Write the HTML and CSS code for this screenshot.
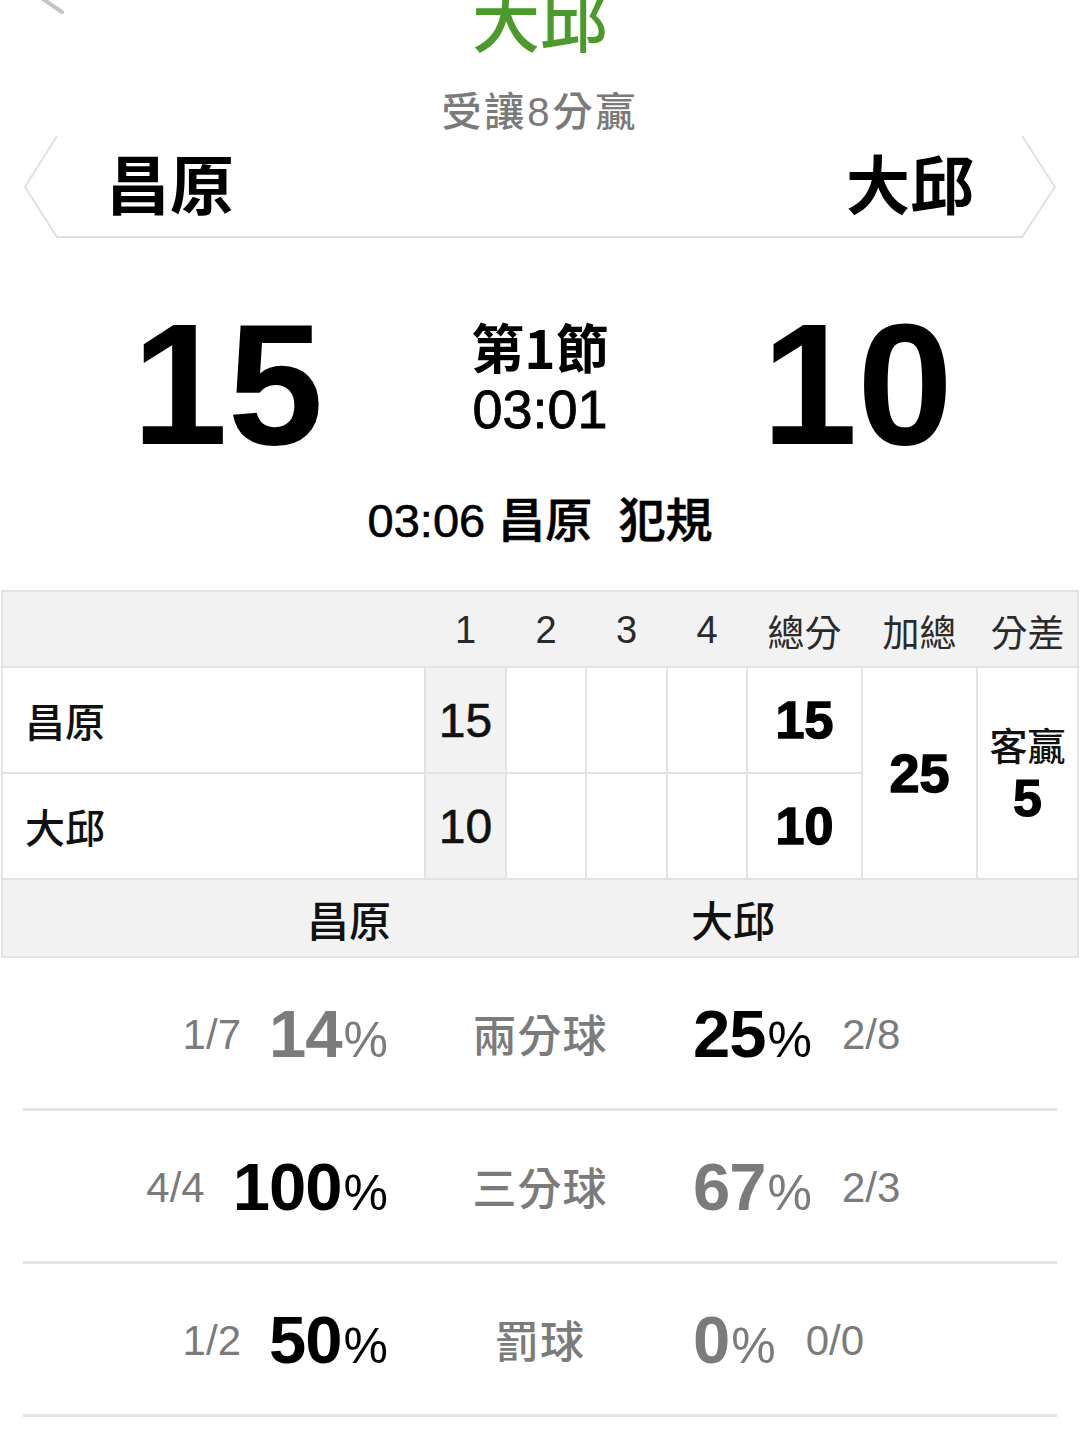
FILE: index.html
```html
<!DOCTYPE html>
<html lang="zh-Hant">
<head>
<meta charset="utf-8">
<title>大邱</title>
<link rel="stylesheet" href="styles.css">
</head>
<body>
<div class="page">
  <header class="topbar">
    <svg class="back" width="80" height="20" viewBox="0 0 80 20"><line x1="43" y1="-1" x2="62" y2="12" stroke="#c4c4c4" stroke-width="4" stroke-linecap="round"/></svg>
    <h1 class="title">大邱</h1>
    <p class="handicap">受讓8分贏</p>
  </header>

  <section class="banner">
    <svg class="banner-frame" width="1080" height="104" viewBox="0 0 1080 104"><polyline points="57,1 25,52 57,102 1022,102 1055,52 1022,1" fill="none" stroke="#e0e0e0" stroke-width="2"/></svg>
    <span class="banner-team">昌原</span>
    <span class="banner-team">大邱</span>
  </section>

  <section class="score">
    <div class="score-num left">15</div>
    <div class="score-mid">
      <div class="period">第1節</div>
      <div class="clock">03:01</div>
    </div>
    <div class="score-num right">10</div>
  </section>

  <p class="event">03:06 昌原&nbsp; 犯規</p>

  <section class="box">
    <div class="box-head">
      <span></span><span>1</span><span>2</span><span>3</span><span>4</span><span class="cjk">總分</span><span class="cjk">加總</span><span class="cjk">分差</span>
    </div>
    <div class="cell name">昌原</div>
    <div class="cell q cur">15</div>
    <div class="cell q"></div>
    <div class="cell q"></div>
    <div class="cell q"></div>
    <div class="cell tot">15</div>
    <div class="cell sum">25</div>
    <div class="cell diff"><span class="diff-label">客贏</span><span class="diff-num">5</span></div>
    <div class="cell name">大邱</div>
    <div class="cell q cur">10</div>
    <div class="cell q"></div>
    <div class="cell q"></div>
    <div class="cell q"></div>
    <div class="cell tot">10</div>
    <div class="box-foot">
      <span class="foot-l">昌原</span><span></span><span class="foot-r">大邱</span>
    </div>
  </section>

  <section class="stats">
    <div class="stat">
      <div class="side l"><span class="frac">1/7</span><span class="pct dim">14<small>%</small></span></div>
      <div class="label">兩分球</div>
      <div class="side r"><span class="pct">25<small>%</small></span><span class="frac">2/8</span></div>
    </div>
    <div class="stat">
      <div class="side l"><span class="frac">4/4</span><span class="pct">100<small>%</small></span></div>
      <div class="label">三分球</div>
      <div class="side r"><span class="pct dim">67<small>%</small></span><span class="frac">2/3</span></div>
    </div>
    <div class="stat">
      <div class="side l"><span class="frac">1/2</span><span class="pct">50<small>%</small></span></div>
      <div class="label">罰球</div>
      <div class="side r"><span class="pct dim">0<small>%</small></span><span class="frac">0/0</span></div>
    </div>
  </section>
</div>
</body>
</html>
```

FILE: styles.css
```css
html, body {
  margin: 0;
  padding: 0;
  background: #ffffff;
}
body {
  font-family: "Liberation Sans", "Noto Sans CJK TC", sans-serif;
  color: #111;
  width: 1080px;
  overflow: hidden;
}
.page {
  width: 1080px;
}

/* top */
.topbar {
  position: relative;
  display: flow-root;
  text-align: center;
}
.back {
  position: absolute;
  left: 0;
  top: 0;
}
.title {
  margin: -16px 0 0;
  font-family: "Noto Sans CJK TC", sans-serif;
  font-size: 68px;
  line-height: 68px;
  font-weight: 500;
  color: #4c9a2c;
}
.handicap {
  margin: 39px 0 0;
  font-family: "Liberation Sans", "Noto Sans CJK TC", sans-serif;
  font-size: 40px;
  line-height: 42px;
  letter-spacing: 3px;
  font-weight: 500;
  color: #7a7a7a;
}

/* banner */
.banner {
  position: relative;
  margin-top: 2px;
  height: 104px;
  display: flex;
  justify-content: space-between;
  align-items: center;
  padding: 0 106px 12px 106px;
  box-sizing: border-box;
}
.banner-frame {
  position: absolute;
  left: 0;
  top: 0;
}
.banner-team {
  position: relative;
  font-family: "Noto Sans CJK TC", sans-serif;
  font-size: 64px;
  line-height: 64px;
  font-weight: 700;
  color: #000;
}

/* score */
.score {
  margin-top: 61px;
  display: grid;
  grid-template-columns: 1fr auto 1fr;
  height: 170px;
}
.score-num {
  font-family: "Liberation Sans", sans-serif;
  font-weight: 700;
  font-size: 172px;
  line-height: 168px;
  color: #000;
}
.score-num.left {
  padding-left: 132px;
  text-align: left;
}
.score-num.right {
  padding-right: 127px;
  text-align: right;
}
.score-mid {
  padding-top: 16px;
  text-align: center;
  display: flex;
  flex-direction: column;
  align-items: center;
  gap: 2px;
}
.period {
  font-family: "Noto Sans CJK TC", sans-serif;
  font-size: 53px;
  line-height: 60px;
  height: 60px;
  overflow: visible;
  font-weight: 700;
  color: #000;
}
.clock {
  font-family: "Liberation Sans", sans-serif;
  font-size: 54px;
  line-height: 62px;
  font-weight: 400;
  color: #000;
  -webkit-text-stroke: 0.8px #000;
}
.event {
  margin: 28px 0 0;
  text-align: center;
  font-family: "Liberation Sans", "Noto Sans CJK TC", sans-serif;
  font-size: 47px;
  line-height: 46px;
  font-weight: 500;
  color: #000;
  -webkit-text-stroke: 0.6px #000;
}

/* box score */
.box {
  margin: 46px 1px 0;
  padding: 2px;
  background: #e2e2e2;
  display: grid;
  grid-template-columns: 421px 79px 78px 79px 78px 113px 113px 99px;
  grid-template-rows: 74px 104px 104px 76px;
  gap: 2px;
}
.box-head {
  grid-column: 1 / -1;
  display: grid;
  grid-template-columns: 421px 79px 78px 79px 78px 113px 113px 99px;
  column-gap: 2px;
  background: #f2f2f2;
  align-items: center;
  font-size: 38px;
  color: #2a2a2a;
  text-align: center;
  padding-top: 3px;
}
.box-head .cjk {
  font-family: "Noto Sans CJK TC", sans-serif;
  font-size: 37px;
}
.cell {
  background: #fff;
  display: flex;
  align-items: center;
  justify-content: center;
}
.cell.name {
  justify-content: flex-start;
  padding-left: 22px;
  font-family: "Noto Sans CJK TC", sans-serif;
  font-size: 40px;
  font-weight: 500;
  color: #111;
}
.cell.q {
  font-size: 48px;
  color: #111;
  -webkit-text-stroke: 0.6px #111;
}
.cell.cur {
  background: #f2f2f2;
}
.cell.tot {
  font-size: 52px;
  font-weight: 700;
  color: #000;
  -webkit-text-stroke: 1.5px #000;
}
.cell.sum {
  grid-column: 7;
  grid-row: 2 / span 2;
  font-size: 54px;
  font-weight: 700;
  color: #000;
  -webkit-text-stroke: 1.5px #000;
}
.cell.diff {
  grid-column: 8;
  grid-row: 2 / span 2;
  flex-direction: column;
}
.diff-label {
  font-family: "Noto Sans CJK TC", sans-serif;
  font-size: 38px;
  line-height: 50px;
  font-weight: 500;
  color: #111;
}
.diff-num {
  font-size: 52px;
  line-height: 58px;
  font-weight: 700;
  color: #000;
  -webkit-text-stroke: 1.2px #000;
}
.box-foot {
  grid-column: 1 / -1;
  background: #f2f2f2;
  display: grid;
  grid-template-columns: 398px 280px 1fr;
  align-items: center;
  font-family: "Noto Sans CJK TC", sans-serif;
  font-size: 42px;
  font-weight: 500;
  color: #111;
}
.foot-l {
  text-align: right;
  padding-right: 10px;
}
.foot-r {
  padding-left: 10px;
}

/* stats */
.stats {
  margin: 0 23px;
}
.stat {
  height: 150px;
  border-bottom: 3px solid #e4e4e4;
  display: grid;
  grid-template-columns: 377px 280px 1fr;
  align-items: center;
}
.side {
  display: flex;
  align-items: center;
  gap: 28px;
}
.side.l {
  justify-content: flex-end;
  padding-right: 12px;
}
.side.r {
  justify-content: flex-start;
  padding-left: 13px;
  gap: 30px;
}
.frac {
  font-size: 42px;
  color: #7b7b7b;
  padding-top: 4px;
}
.pct {
  font-size: 67px;
  font-weight: 700;
  color: #000;
  letter-spacing: -1px;
}
.pct small {
  font-size: 50px;
  font-weight: 400;
  letter-spacing: 0;
  margin-left: 2px;
}
.pct.dim {
  color: #7b7b7b;
}
.label {
  text-align: center;
  font-family: "Noto Sans CJK TC", sans-serif;
  font-size: 44px;
  font-weight: 500;
  color: #7b7b7b;
  letter-spacing: 1px;
}
```
